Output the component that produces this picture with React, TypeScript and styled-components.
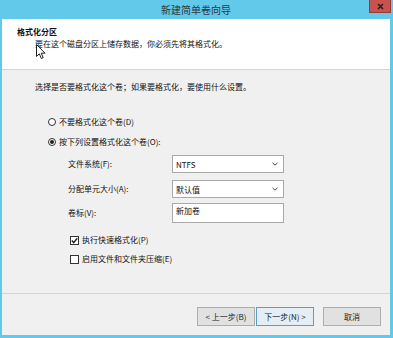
import React from "react";
import styled, { createGlobalStyle } from "styled-components";

const Global = createGlobalStyle`
  html, body { margin: 0; padding: 0; background: #62c9ea; }
  body { font-family: "Noto Sans CJK SC", "Noto Sans", sans-serif; }
  * { box-sizing: border-box; }
`;

const Window = styled.div`
  position: relative;
  width: 393px;
  height: 338px;
  background: #62c9ea;
  display: flex;
  flex-direction: column;
  padding: 0 3px 3px 2px;
  font-size: 8px;
  color: #111;
`;

const TitleBar = styled.div`
  position: relative;
  height: 19px;
  display: flex;
  align-items: center;
  justify-content: center;
  font-size: 10px;
  color: #2b3a40;
  padding-bottom: 1px;
`;

const CloseBtn = styled.div`
  position: absolute;
  right: -1px;
  top: 0;
  width: 22px;
  height: 13px;
  background: #c8534c;
  border: 1px solid #9e3a36;
  border-top: none;
  display: flex;
  align-items: center;
  justify-content: center;
`;

const Client = styled.div`
  flex: 1;
  background: #f0f0f0;
  display: flex;
  flex-direction: column;
`;

const Header = styled.div`
  height: 51px;
  background: #fff;
  border-bottom: 1px solid #d5d5d5;
  padding: 7px 0 0 15px;
  display: flex;
  flex-direction: column;
`;

const HeaderTitle = styled.div`
  font-weight: bold;
  line-height: 12px;
`;

const HeaderSub = styled.div`
  line-height: 12px;
  padding-left: 18px;
`;

const Body = styled.div`
  flex: 1;
  padding: 11px 0 0 33px;
  display: flex;
  flex-direction: column;
`;

const Intro = styled.div`
  line-height: 12px;
`;

const OptionRow = styled.label<{ $top: number; $indent: number }>`
  display: flex;
  align-items: center;
  gap: 3px;
  height: 12px;
  line-height: 12px;
  margin-top: ${(p) => p.$top}px;
  margin-left: ${(p) => p.$indent}px;
`;

const RadioDot = styled.span<{ $on?: boolean }>`
  width: 8px;
  height: 8px;
  border-radius: 50%;
  border: 1px solid #333;
  background: #fff;
  display: flex;
  align-items: center;
  justify-content: center;
  &::after {
    content: "";
    width: 4px;
    height: 4px;
    border-radius: 50%;
    background: ${(p) => (p.$on ? "#222" : "transparent")};
  }
`;

const CheckBox = styled.span`
  width: 9px;
  height: 9px;
  border: 1px solid #333;
  background: #fff;
  display: flex;
  align-items: center;
  justify-content: center;
`;

const Form = styled.div`
  display: grid;
  grid-template-columns: 104px 112px;
  grid-auto-rows: auto;
  margin: 7px 0 0 33px;
  row-gap: 0;
  align-items: center;
`;

const FieldLabel = styled.div<{ $top: number }>`
  margin-top: ${(p) => p.$top}px;
  line-height: 12px;
`;

const Select = styled.div<{ $top: number }>`
  margin-top: ${(p) => p.$top}px;
  height: 18px;
  background: #fff;
  border: 1px solid #a9a9a9;
  display: flex;
  align-items: center;
  justify-content: space-between;
  padding: 0 5px 0 3px;
`;

const TextBox = styled.div<{ $top: number }>`
  margin-top: ${(p) => p.$top}px;
  height: 20px;
  background: #fff;
  border: 1px solid #a9a9a9;
  padding: 1px 3px;
  line-height: 12px;
  align-self: start;
`;

const Footer = styled.div`
  height: 42px;
  border-top: 1px solid #d5d5d5;
  display: flex;
  justify-content: flex-end;
  align-items: flex-start;
  padding: 13px 9px 0 0;
`;

const Btn = styled.div<{ $focus?: boolean; $gap?: number }>`
  width: 58px;
  height: 19px;
  background: ${(p) => (p.$focus ? "#e5eef5" : "#e1e1e1")};
  border: 1px solid ${(p) => (p.$focus ? "#5a9bd0" : "#adadad")};
  display: flex;
  align-items: center;
  justify-content: center;
  margin-left: ${(p) => p.$gap ?? 0}px;
  color: #222;
`;

const Cursor = styled.svg`
  position: absolute;
  left: 36px;
  top: 44px;
`;

const Chevron = () => (
  <svg width="6" height="4" viewBox="0 0 6 4">
    <path d="M0.5 0.8 L3 3.2 L5.5 0.8" fill="none" stroke="#444" strokeWidth="1" />
  </svg>
);

export default function App() {
  return (
    <>
      <Global />
      <Window>
        <TitleBar>
          新建简单卷向导
          <CloseBtn>
            <svg width="7" height="7" viewBox="0 0 7 7">
              <path d="M1 1 L6 6 M6 1 L1 6" stroke="#222" strokeWidth="1.6" />
            </svg>
          </CloseBtn>
        </TitleBar>
        <Client>
          <Header>
            <HeaderTitle>格式化分区</HeaderTitle>
            <HeaderSub>要在这个磁盘分区上储存数据，你必须先将其格式化。</HeaderSub>
          </Header>
          <Body>
            <Intro>选择是否要格式化这个卷；如果要格式化，要使用什么设置。</Intro>
            <OptionRow $top={23} $indent={13}>
              <RadioDot />
              不要格式化这个卷(D)
            </OptionRow>
            <OptionRow $top={8} $indent={13}>
              <RadioDot $on />
              按下列设置格式化这个卷(O):
            </OptionRow>
            <Form>
              <FieldLabel $top={0}>文件系统(F):</FieldLabel>
              <Select $top={0}>
                NTFS
                <Chevron />
              </Select>
              <FieldLabel $top={7}>分配单元大小(A):</FieldLabel>
              <Select $top={7}>
                默认值
                <Chevron />
              </Select>
              <FieldLabel $top={5}>卷标(V):</FieldLabel>
              <TextBox $top={5}>新加卷</TextBox>
            </Form>
            <OptionRow $top={11} $indent={35}>
              <CheckBox>
                <svg width="7" height="7" viewBox="0 0 7 7">
                  <path d="M0.8 3.6 L2.7 5.6 L6.3 1.2" fill="none" stroke="#222" strokeWidth="1.4" />
                </svg>
              </CheckBox>
              执行快速格式化(P)
            </OptionRow>
            <OptionRow $top={7} $indent={35}>
              <CheckBox />
              启用文件和文件夹压缩(E)
            </OptionRow>
          </Body>
          <Footer>
            <Btn>&lt; 上一步(B)</Btn>
            <Btn $focus $gap={1}>下一步(N) &gt;</Btn>
            <Btn $gap={9}>取消</Btn>
          </Footer>
        </Client>
        <Cursor width="11" height="16" viewBox="0 0 11 16">
          <path d="M0.5 0.5 L0.5 12.5 L3.3 9.8 L5.3 14.5 L7.2 13.7 L5.2 9.2 L9 9.2 Z" fill="#fff" stroke="#222" strokeWidth="1" />
        </Cursor>
      </Window>
    </>
  );
}
